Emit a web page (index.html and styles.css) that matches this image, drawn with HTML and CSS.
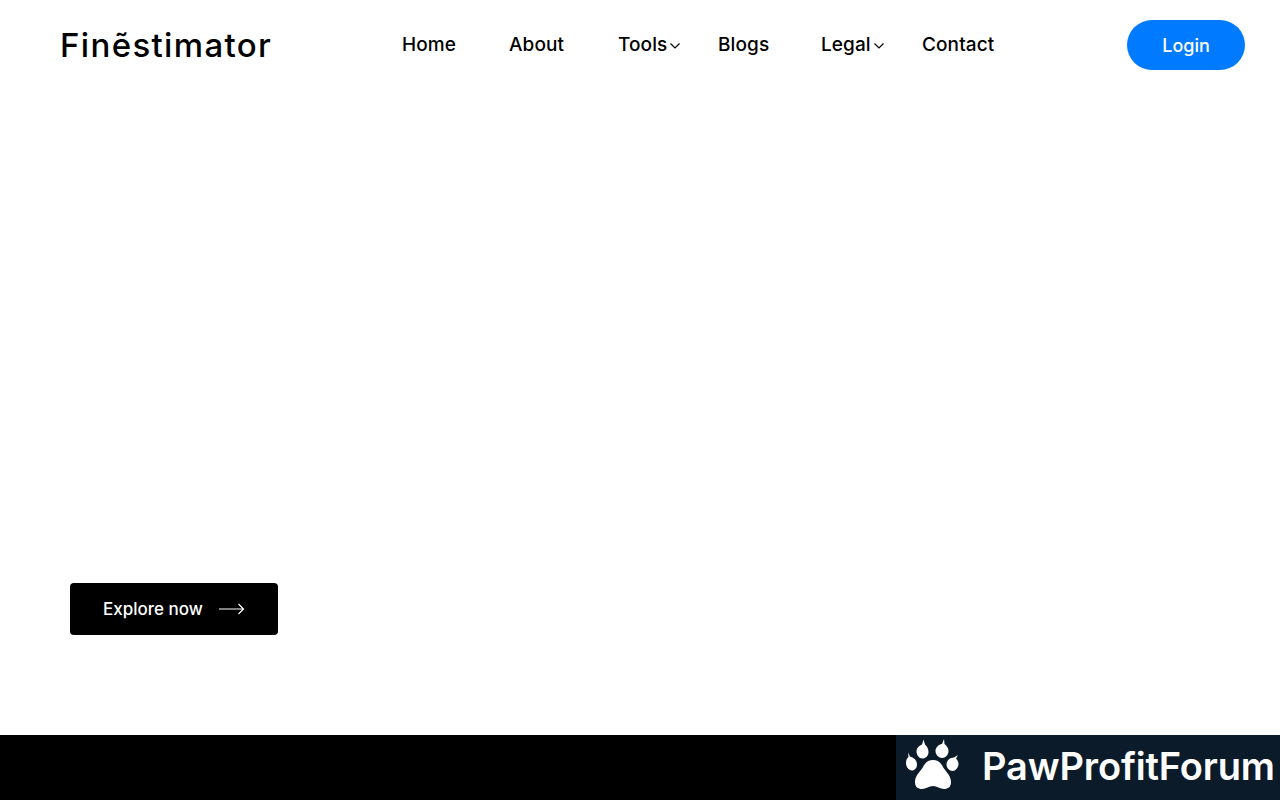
FILE: index.html
```html
<!DOCTYPE html>
<html lang="en">
<head>
<meta charset="utf-8">
<title>Finestimator</title>
<link rel="stylesheet" href="styles.css">
</head>
<body>
<header class="header">
  <a class="logo" href="#">Finẽstimator</a>
  <nav class="nav">
    <a class="nav-item" href="#">Home</a>
    <a class="nav-item" href="#">About</a>
    <a class="nav-item" href="#">Tools<svg class="caret" viewBox="0 0 12 8" width="12" height="8"><path d="M1.5 1.5 6 6l4.5-4.5" fill="none" stroke="#000" stroke-width="1.2"/></svg></a>
    <a class="nav-item" href="#">Blogs</a>
    <a class="nav-item" href="#">Legal<svg class="caret" viewBox="0 0 12 8" width="12" height="8"><path d="M1.5 1.5 6 6l4.5-4.5" fill="none" stroke="#000" stroke-width="1.2"/></svg></a>
    <a class="nav-item" href="#">Contact</a>
  </nav>
  <a class="login" href="#">Login</a>
</header>
<main class="hero">
  <a class="explore" href="#">Explore now<svg class="arrow" viewBox="0 0 26 12" width="26" height="12"><path d="M0 6h24.500M19.500 1l5 5-5 5" fill="none" stroke="#fff" stroke-width="1.2"/></svg></a>
</main>
<footer class="footer"></footer>
<aside class="banner">
  <svg class="paw" viewBox="0 3 80 65" width="80" height="65">
    <g fill="#fff">
      <path d="M37 28C42 28 45 31 47 35C49 39 55 43 55 50C55 55 52 57 48 57C44 57 41 54 37 54C33 54 30 57 26 57C22 57 19 55 19 50C19 43 25 39 27 35C29 31 32 28 37 28Z"/>
      <path d="M27.500 7.500 29 12.500C31 14 32.500 17 32.500 20C32.500 24 29.500 26.500 26.500 26.500C23 26.500 20.500 23 20.500 19.500C20.500 16 23.500 13.500 26 12.500Z"/>
      <path d="M48 7 48.500 12C50.500 13.500 52.500 16 52.500 19C52.500 23 49.500 26 46 26C43 26 39.500 23 39.500 19C39.500 15.500 42.500 12.500 46 12Z"/>
      <path d="M12 20.500 14 24.500C17.500 25.500 21 28 21 32.500C21 36 18.500 38.500 16 38.500C12.500 38.500 10 34.500 10 31C10 28 11 26 12.500 25Z"/>
      <path d="M62 23 60 26.500C61.500 28 62.500 30 62.500 32C62.500 35.500 59.500 39 56.500 39C53.500 39 50.500 36 50.500 32.500C50.500 28.500 54 25.500 58 25.500Z"/>
    </g>
  </svg>
  <span class="banner-text">PawProfitForum</span>
</aside>
</body>
</html>
```
FILE: styles.css
```css
* { box-sizing: border-box; }
html, body { margin: 0; height: 100%; }
body {
  position: relative;
  display: flex;
  flex-direction: column;
  height: 800px;
  overflow: hidden;
  background: #fff;
  color: #000;
  font-family: Inter, "Liberation Sans", sans-serif;
}
a { color: inherit; text-decoration: none; }
.header {
  display: flex;
  align-items: center;
  height: 90px;
  padding: 0 35px 0 60px;
}
.logo {
  width: 342px;
  font-size: 33px;
  font-weight: 500;
  line-height: 1;
  letter-spacing: 1.35px;
}
.nav {
  display: grid;
  grid-template-columns: 107px 109px 100px 103px 101px auto;
  align-items: center;
  flex: 1;
}
.nav-item {
  display: flex;
  align-items: center;
  font-size: 19px;
  font-weight: 550;
  line-height: 24px;
  letter-spacing: 0.1px;
}
.caret { margin-left: 2px; margin-top: 2px; }
.login {
  display: flex;
  align-items: center;
  justify-content: center;
  width: 118px;
  height: 50px;
  border-radius: 25px;
  background: #007bff;
  color: #fff;
  font-size: 18px;
  font-weight: 550;
}
.hero {
  flex: 1;
  display: flex;
  align-items: flex-start;
  padding: 493px 70px 0;
}
.explore {
  display: flex;
  align-items: center;
  justify-content: center;
  gap: 16px;
  width: 208px;
  height: 52px;
  border-radius: 4px;
  background: #000;
  color: #fff;
  font-size: 17px;
  font-weight: 550;
}
.footer { height: 65px; background: #000; }
.banner {
  position: absolute;
  right: 0;
  bottom: 0;
  display: flex;
  align-items: center;
  gap: 6px;
  width: 384px;
  height: 65px;
  background: #0c1b29;
  color: #fff;
}
.paw { flex: none; }
.banner-text {
  padding-bottom: 4px;
  font-size: 38px;
  font-weight: 600;
  letter-spacing: -0.15px;
  white-space: nowrap;
}
```
